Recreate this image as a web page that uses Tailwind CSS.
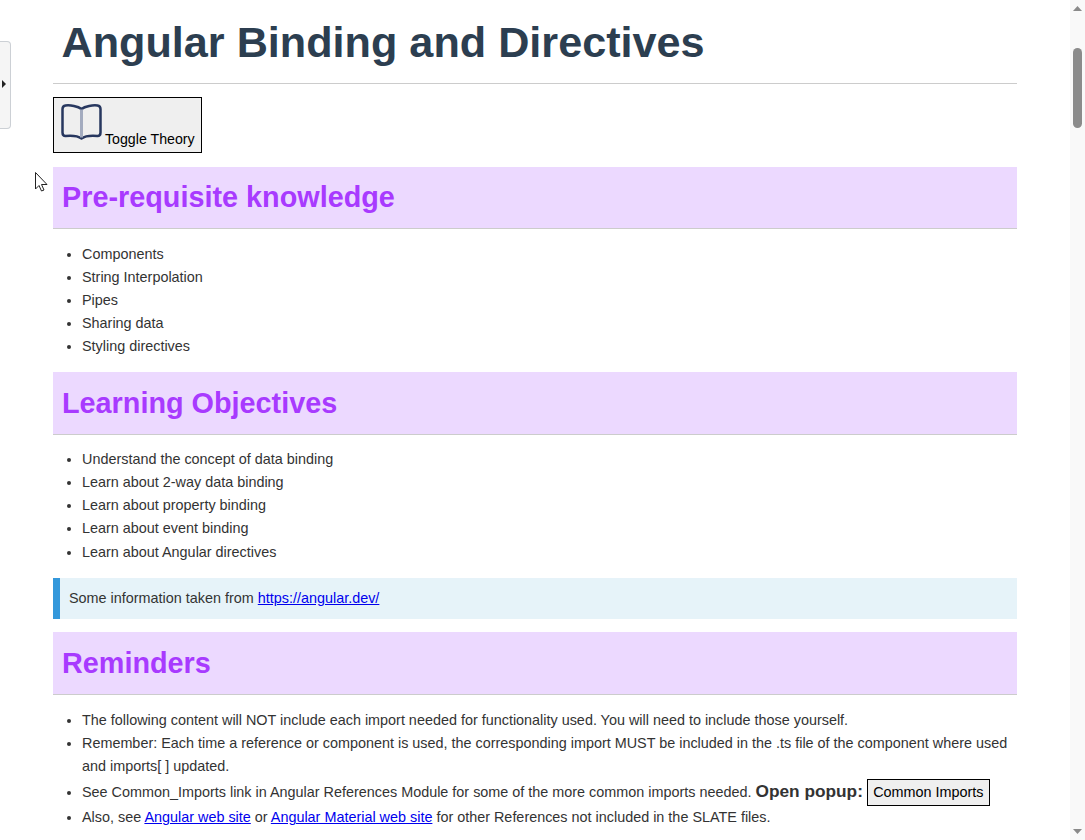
<!DOCTYPE html>
<html>
<head>
<meta charset="utf-8">
<script src="https://cdn.jsdelivr.net/npm/@tailwindcss/browser@4"></script>
</head>
<body class="bg-white overflow-hidden h-[840px] relative text-[#333] font-['Liberation_Sans',Arial,sans-serif]">
<main class="w-[964px] ml-[53px] h-[840px] overflow-hidden">
  <h1 class="h-[84px] pl-[8.500px] pt-[17px] text-[43.200px] leading-[50px] font-bold text-[#2c3e50] border-b border-[#ccc]">Angular Binding and Directives</h1>
  <button class="mt-[13px] h-[56px] w-[149px] border border-black bg-[#efefef] flex items-end pl-[7px] pb-[4px] text-[14.200px] leading-[18px] text-black">
    <svg class="w-[41px] h-[36px] mb-[8.500px] shrink-0" viewBox="0 0 41 36" fill="none"><path d="M20.500 5 C17 2 9 1 4.500 1.500 Q1.500 2 1.500 5 V28.500 Q1.500 32 4.500 32 C10 31.500 17 32 20.500 34.500 C24 32 31 31.500 36.500 32 Q39.500 32 39.500 28.500 V5 Q39.500 2 36.500 1.500 C32 1 24 2 20.500 5 Z" stroke="#27375f" stroke-width="2.500" stroke-linejoin="round"/><path d="M20.500 5.500 V33.500" stroke="#a3abbf" stroke-width="3"/></svg>
    <span class="ml-[3px]">Toggle Theory</span>
  </button>
  <h2 class="mt-[14px] h-[62px] pl-[9px] flex items-center bg-[#ecd9ff] border-b border-[#ccc] text-[28.800px] font-bold text-[#a83aff]">Pre-requisite knowledge</h2>
  <ul class="mt-[14px] pl-[29px] list-disc text-[14.400px] leading-[23.040px] text-[#333]">
    <li>Components</li>
    <li>String Interpolation</li>
    <li>Pipes</li>
    <li>Sharing data</li>
    <li>Styling directives</li>
  </ul>
  <h2 class="mt-[13.800px] h-[63px] pl-[9px] pt-[1px] flex items-center bg-[#ecd9ff] border-b border-[#ccc] text-[28.800px] font-bold text-[#a83aff]">Learning Objectives</h2>
  <ul class="mt-[13.320px] pl-[29px] list-disc text-[14.400px] leading-[23.040px] text-[#333]">
    <li>Understand the concept of data binding</li>
    <li>Learn about 2-way data binding</li>
    <li>Learn about property binding</li>
    <li>Learn about event binding</li>
    <li>Learn about Angular directives</li>
  </ul>
  <div class="mt-[14.480px] h-[41px] flex items-center bg-[#e6f3f9] border-l-[7px] border-[#3498db] pl-[9px] text-[14.400px]">
    <p>Some information taken from <a href="#" class="text-[#0000ee] underline">https://angular.dev/</a></p>
  </div>
  <h2 class="mt-[13px] h-[63px] pl-[9px] pt-[1px] flex items-center bg-[#ecd9ff] border-b border-[#ccc] text-[28.800px] font-bold text-[#a83aff]">Reminders</h2>
  <ul class="mt-[14px] pl-[29px] list-disc text-[14.400px] leading-[23.040px] text-[#333]">
    <li>The following content will NOT include each import needed for functionality used. You will need to include those yourself.</li>
    <li>Remember: Each time a reference or component is used, the corresponding import MUST be included in the .ts file of the component where used and imports[ ] updated.</li>
    <li class="pt-[1px]">See Common_Imports link in Angular References Module for some of the more common imports needed. <strong class="text-[17.280px]">Open popup:</strong> <button class="border border-black bg-[#efefef] h-[27px] w-[123px] text-[14.400px] text-black">Common Imports</button></li>
    <li>Also, see <a href="#" class="text-[#0000ee] underline">Angular web site</a> or <a href="#" class="text-[#0000ee] underline">Angular Material web site</a> for other References not included in the SLATE files.</li>
  </ul>
</main>

<div class="absolute left-0 top-[41px] w-[11px] h-[88px] bg-[#f5f5f5] border border-l-0 border-[#ccd0d5] rounded-r-[4px] flex items-center justify-start pl-[2px]">
  <svg class="w-[4px] h-[8px] -mt-[2px]" viewBox="0 0 4 8"><path d="M0 0 L4 4 L0 8 Z" fill="#222"/></svg>
</div>

<svg class="absolute left-[35px] top-[172px] w-[13px] h-[20px]" viewBox="0 0 13 20" fill="none"><path d="M0.500 0.500 V17 L4 13.500 L6.500 19 L9 18 L6.500 12.500 L12 12.500 Z" fill="#fff" stroke="#222" stroke-width="1"/></svg>

<div class="absolute right-0 top-0 w-[15px] h-[840px] bg-[#f9f9f9]">
  <svg class="absolute left-[3px] top-[6px] w-[9px] h-[5px]" viewBox="0 0 9 5"><path d="M4.500 0 L9 5 H0 Z" fill="#8a8a8a"/></svg>
  <div class="absolute left-[3px] top-[48px] w-[9px] h-[80px] rounded-full bg-[#8b8b8b]"></div>
  <svg class="absolute left-[3px] top-[829px] w-[9px] h-[5px]" viewBox="0 0 9 5"><path d="M4.500 5 L9 0 H0 Z" fill="#8a8a8a"/></svg>
</div>
</body>
</html>
